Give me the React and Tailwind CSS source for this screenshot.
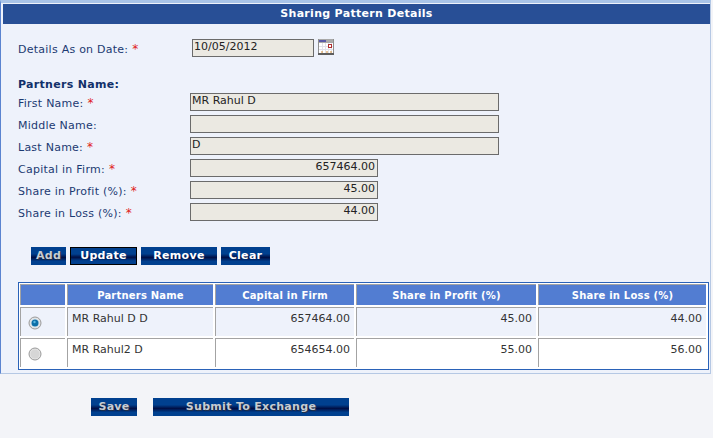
const font = { fontFamily: '"DejaVu Sans", Verdana, sans-serif' };

function Req() {
  return <span className="text-[#e02020] ml-1 text-[12px]">*</span>;
}

function Field({ label, required, value, width, right }) {
  return (
    <div className="flex items-start h-[18px] mb-1">
      <div className="w-[172px] text-[11px] leading-[21px] tracking-[0.25px] text-[#1c3a72]">
        {label}
        {required && <Req />}
      </div>
      <div
        className={`h-[18px] border border-[#6b6b6b] bg-[#ebe9e2] text-[11px] leading-[14px] text-[#222] pl-[1px] pr-[2px] ${width} ${right ? "text-right" : ""}`}
      >
        {value}
      </div>
    </div>
  );
}

function Btn({ label, width, disabled, active }) {
  const text = disabled
    ? "text-[#c6ccd4] [text-shadow:1px_1px_0_#20304a]"
    : "text-white";
  return (
    <div
      className={`h-[18px] pt-[1px] flex items-center justify-center text-[11px] tracking-[0.3px] font-bold bg-[linear-gradient(#00408f_0%,#00408f_38%,#000f45_58%,#00408f_80%,#00408f_100%)] ${text} ${width} ${active ? "border border-black" : ""}`}
    >
      {label}
    </div>
  );
}

function CalendarIcon() {
  return (
    <svg width="16" height="16" viewBox="0 0 16 16" className="ml-[4px]">
      <rect x="0" y="0" width="16" height="15" fill="#fff" />
      <rect x="0" y="0" width="16" height="4" fill="#a9a9a9" />
      <rect x="1" y="1" width="7" height="2" fill="#5a5aa8" />
      <path d="M0.5 0v15M15.5 0v15" stroke="#8f8f8f" />
      <path d="M1 7.5h14M1 10.5h14M4.5 4v10M7.5 4v10M10.5 4v10M13.5 4v10" stroke="#e2e2ea" />
      <rect x="10.5" y="5.5" width="3" height="3" fill="#fff" stroke="#b03030" />
      <path d="M3 13h2M8 13h2M12 13h2" stroke="#d08a30" />
      <rect x="0" y="14" width="16" height="2" fill="#5e5e5e" />
    </svg>
  );
}

function Radio({ checked }) {
  return (
    <svg width="14" height="14" viewBox="0 0 14 14">
      <circle cx="7" cy="7" r="6" fill="#e4e4e4" stroke="#9a9a9a" />
      <circle cx="7" cy="7" r="4.5" fill={checked ? "#d8e4ec" : "#d6d6d6"} />
      {checked && <circle cx="7" cy="7" r="3.5" fill="#0d6fa8" />}
      {checked && <circle cx="6.5" cy="6" r="1.2" fill="#58b6e0" />}
    </svg>
  );
}

const rows = [
  { name: "MR Rahul D D", capital: "657464.00", profit: "45.00", loss: "44.00", checked: true, bg: "bg-[#eef2fb]" },
  { name: "MR Rahul2 D", capital: "654654.00", profit: "55.00", loss: "56.00", checked: false, bg: "bg-white" },
];

const headers = ["", "Partners Name", "Capital in Firm", "Share in Profit (%)", "Share in Loss (%)"];
const edge = "border-t border-l border-[#a3a3a3]";
const cellCls = `${edge} pt-[4px] text-[11px] leading-[14px] text-[#333]`;

export default function App() {
  return (
    <div className="w-[713px] h-[438px] bg-[#f3f4f8] overflow-hidden" style={font}>
      <div className="h-[374px] w-[711px] bg-[#eef2fb] border-t-[3px] border-t-[#a9c4e8] border-l border-l-[#5b84d0] border-b border-b-[#b5c8e4] border-r border-r-[#b5c8e4] pl-[2px] pt-[1px]">
        <div className="h-5 bg-[#284f96] text-white text-[11px] tracking-[0.3px] font-bold flex items-center justify-center">
          Sharing Pattern Details
        </div>

        <div className="pl-[15px]">
          <div className="flex items-start h-[18px] mt-[15px]">
            <div className="w-[174px] text-[11px] leading-[21px] tracking-[0.25px] text-[#1c3a72]">
              Details As on Date:
              <Req />
            </div>
            <div className="w-[122px] h-[18px] border border-[#6b6b6b] bg-[#ebe9e2] text-[11px] leading-[14px] text-[#222] px-[1px]">
              10/05/2012
            </div>
            <CalendarIcon />
          </div>

          <div className="mt-[20px] h-[16px] text-[11px] tracking-[0.3px] font-bold text-[#12306a] leading-[16px]">Partners Name:</div>

          <Field label="First Name:" required value="MR Rahul D" width="w-[309px]" />
          <Field label="Middle Name:" value="" width="w-[309px]" />
          <Field label="Last Name:" required value="D" width="w-[309px]" />
          <Field label="Capital in Firm:" required value="657464.00" width="w-[188px]" right />
          <Field label="Share in Profit (%):" required value="45.00" width="w-[188px]" right />
          <Field label="Share in Loss (%):" required value="44.00" width="w-[188px]" right />

          <div className="flex gap-1 ml-[13px] mt-[26px]">
            <Btn label="Add" width="w-[35px]" disabled />
            <Btn label="Update" width="w-[67px]" active />
            <Btn label="Remove" width="w-[76px]" />
            <Btn label="Clear" width="w-[49px]" />
          </div>

          <div className="mt-[17px] w-[691px] border border-[#2a62b8] bg-white p-[1px] pb-[2px]">
            <div className="grid grid-cols-[45px_146px_139px_180px_168px] grid-rows-[21px_29px_29px] gap-[2px]">
              {headers.map((h) => (
                <div
                  key={h}
                  className={`${edge} bg-[#527dd2] text-white text-[10px] tracking-[0.2px] font-bold flex items-center justify-center`}
                >
                  {h}
                </div>
              ))}
              {rows.map((r) => [
                <div key={`${r.name}-radio`} className={`${edge} ${r.bg} pl-[7px] pt-[8px]`}>
                  <Radio checked={r.checked} />
                </div>,
                <div key={`${r.name}-name`} className={`${cellCls} ${r.bg} pl-[4px]`}>{r.name}</div>,
                <div key={`${r.name}-capital`} className={`${cellCls} ${r.bg} text-right pr-[4px]`}>{r.capital}</div>,
                <div key={`${r.name}-profit`} className={`${cellCls} ${r.bg} text-right pr-[4px]`}>{r.profit}</div>,
                <div key={`${r.name}-loss`} className={`${cellCls} ${r.bg} text-right pr-[4px]`}>{r.loss}</div>,
              ])}
            </div>
          </div>
        </div>
      </div>

      <div className="flex gap-4 ml-[91px] mt-[24px]">
        <Btn label="Save" width="w-[46px]" disabled />
        <Btn label="Submit To Exchange" width="w-[196px]" disabled />
      </div>
    </div>
  );
}
